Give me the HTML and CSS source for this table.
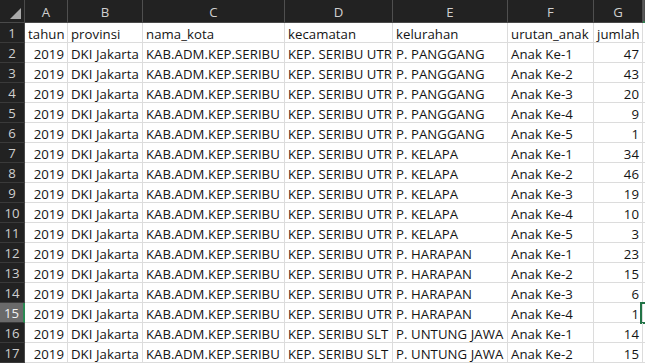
FILE: index.html
```html
<!DOCTYPE html>
<html>
<head>
<meta charset="utf-8">
<link rel="stylesheet" href="styles.css">
</head>
<body>
<div class="sheet">
  <div class="corner"><svg class="tri" width="12" height="12" viewBox="0 0 12 12"><polygon points="11,0 11,11 0,11" fill="#a9a9a9"/></svg></div>
  <div class="ch">A</div><div class="ch">B</div><div class="ch">C</div><div class="ch">D</div><div class="ch">E</div><div class="ch">F</div><div class="ch">G</div><div class="ch sel-col"></div>

  <div class="rh">1</div><div class="c">tahun</div><div class="c">provinsi</div><div class="c">nama_kota</div><div class="c">kecamatan</div><div class="c">kelurahan</div><div class="c">urutan_anak</div><div class="c">jumlah</div><div class="c"></div>

  <div class="rh">2</div><div class="c n">2019</div><div class="c">DKI Jakarta</div><div class="c">KAB.ADM.KEP.SERIBU</div><div class="c">KEP. SERIBU UTR</div><div class="c">P. PANGGANG</div><div class="c">Anak Ke-1</div><div class="c n">47</div><div class="c"></div>

  <div class="rh">3</div><div class="c n">2019</div><div class="c">DKI Jakarta</div><div class="c">KAB.ADM.KEP.SERIBU</div><div class="c">KEP. SERIBU UTR</div><div class="c">P. PANGGANG</div><div class="c">Anak Ke-2</div><div class="c n">43</div><div class="c"></div>

  <div class="rh">4</div><div class="c n">2019</div><div class="c">DKI Jakarta</div><div class="c">KAB.ADM.KEP.SERIBU</div><div class="c">KEP. SERIBU UTR</div><div class="c">P. PANGGANG</div><div class="c">Anak Ke-3</div><div class="c n">20</div><div class="c"></div>

  <div class="rh">5</div><div class="c n">2019</div><div class="c">DKI Jakarta</div><div class="c">KAB.ADM.KEP.SERIBU</div><div class="c">KEP. SERIBU UTR</div><div class="c">P. PANGGANG</div><div class="c">Anak Ke-4</div><div class="c n">9</div><div class="c"></div>

  <div class="rh">6</div><div class="c n">2019</div><div class="c">DKI Jakarta</div><div class="c">KAB.ADM.KEP.SERIBU</div><div class="c">KEP. SERIBU UTR</div><div class="c">P. PANGGANG</div><div class="c">Anak Ke-5</div><div class="c n">1</div><div class="c"></div>

  <div class="rh">7</div><div class="c n">2019</div><div class="c">DKI Jakarta</div><div class="c">KAB.ADM.KEP.SERIBU</div><div class="c">KEP. SERIBU UTR</div><div class="c">P. KELAPA</div><div class="c">Anak Ke-1</div><div class="c n">34</div><div class="c"></div>

  <div class="rh">8</div><div class="c n">2019</div><div class="c">DKI Jakarta</div><div class="c">KAB.ADM.KEP.SERIBU</div><div class="c">KEP. SERIBU UTR</div><div class="c">P. KELAPA</div><div class="c">Anak Ke-2</div><div class="c n">46</div><div class="c"></div>

  <div class="rh">9</div><div class="c n">2019</div><div class="c">DKI Jakarta</div><div class="c">KAB.ADM.KEP.SERIBU</div><div class="c">KEP. SERIBU UTR</div><div class="c">P. KELAPA</div><div class="c">Anak Ke-3</div><div class="c n">19</div><div class="c"></div>

  <div class="rh">10</div><div class="c n">2019</div><div class="c">DKI Jakarta</div><div class="c">KAB.ADM.KEP.SERIBU</div><div class="c">KEP. SERIBU UTR</div><div class="c">P. KELAPA</div><div class="c">Anak Ke-4</div><div class="c n">10</div><div class="c"></div>

  <div class="rh">11</div><div class="c n">2019</div><div class="c">DKI Jakarta</div><div class="c">KAB.ADM.KEP.SERIBU</div><div class="c">KEP. SERIBU UTR</div><div class="c">P. KELAPA</div><div class="c">Anak Ke-5</div><div class="c n">3</div><div class="c"></div>

  <div class="rh">12</div><div class="c n">2019</div><div class="c">DKI Jakarta</div><div class="c">KAB.ADM.KEP.SERIBU</div><div class="c">KEP. SERIBU UTR</div><div class="c">P. HARAPAN</div><div class="c">Anak Ke-1</div><div class="c n">23</div><div class="c"></div>

  <div class="rh">13</div><div class="c n">2019</div><div class="c">DKI Jakarta</div><div class="c">KAB.ADM.KEP.SERIBU</div><div class="c">KEP. SERIBU UTR</div><div class="c">P. HARAPAN</div><div class="c">Anak Ke-2</div><div class="c n">15</div><div class="c"></div>

  <div class="rh">14</div><div class="c n">2019</div><div class="c">DKI Jakarta</div><div class="c">KAB.ADM.KEP.SERIBU</div><div class="c">KEP. SERIBU UTR</div><div class="c">P. HARAPAN</div><div class="c">Anak Ke-3</div><div class="c n">6</div><div class="c"></div>

  <div class="rh sel-row">15</div><div class="c n">2019</div><div class="c">DKI Jakarta</div><div class="c">KAB.ADM.KEP.SERIBU</div><div class="c">KEP. SERIBU UTR</div><div class="c">P. HARAPAN</div><div class="c">Anak Ke-4</div><div class="c n">1</div><div class="c active"></div>

  <div class="rh">16</div><div class="c n">2019</div><div class="c">DKI Jakarta</div><div class="c">KAB.ADM.KEP.SERIBU</div><div class="c">KEP. SERIBU SLT</div><div class="c">P. UNTUNG JAWA</div><div class="c">Anak Ke-1</div><div class="c n">14</div><div class="c"></div>

  <div class="rh">17</div><div class="c n">2019</div><div class="c">DKI Jakarta</div><div class="c">KAB.ADM.KEP.SERIBU</div><div class="c">KEP. SERIBU SLT</div><div class="c">P. UNTUNG JAWA</div><div class="c">Anak Ke-2</div><div class="c n">15</div><div class="c"></div>
</div>
</body>
</html>
```
FILE: styles.css
```css
html, body {
  margin: 0;
  padding: 0;
  background: #ffffff;
  overflow: hidden;
}

.sheet {
  display: grid;
  grid-template-columns: 25px 43px 75px 142px 108px 115px 86px 49px minmax(0, 1fr);
  grid-template-rows: 23px repeat(17, 20px);
  width: 100%;
  font-family: "Open Sans", "Noto Sans", sans-serif;
  font-size: 13.2px;
}

.corner {
  background: #222222;
  border-right: 1px solid #4a4a4a;
  border-bottom: 1px solid #4a4a4a;
  box-sizing: border-box;
  display: flex;
  align-items: flex-end;
  justify-content: flex-end;
  padding: 0 2px 2px 0;
}

.tri {
  display: block;
}

.ch {
  background: #222222;
  color: #d0d0d0;
  border-right: 1px solid #4f4f4f;
  border-bottom: 1px solid #4a4a4a;
  box-sizing: border-box;
  text-align: center;
  line-height: 16px;
  padding-top: 4px;
}

.ch.sel-col {
  background: #5a5a5a;
  border-bottom: 2px solid #2a8a52;
}

.rh {
  background: #222222;
  color: #d0d0d0;
  border-right: 1px solid #4a4a4a;
  border-bottom: 1px solid #3a3a3a;
  box-sizing: border-box;
  text-align: center;
  line-height: 16px;
  padding-top: 2px;
}

.rh.sel-row {
  background: #6a6a6a;
  color: #f2f2f2;
  border-right: 2px solid #2a8a52;
}

.c {
  color: #141414;
  border-right: 1px solid #dcdcdc;
  border-bottom: 1px solid #dcdcdc;
  box-sizing: border-box;
  line-height: 16px;
  padding: 3px 3px 0 3px;
  white-space: nowrap;
  overflow: hidden;
  letter-spacing: 0.05px;
}

.c.n {
  text-align: right;
  padding-right: 3px;
}

.c.active {
  border: 2px solid #217346;
  margin: -1px 0 -1px -3px;
}
```
